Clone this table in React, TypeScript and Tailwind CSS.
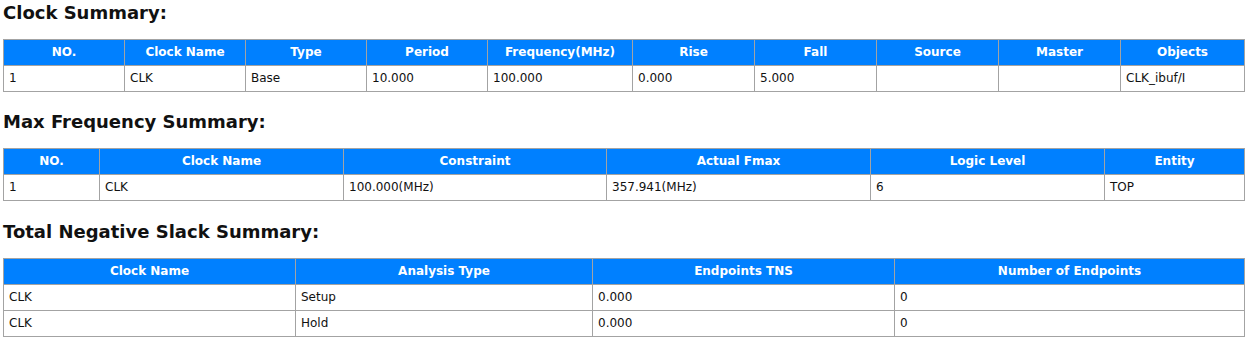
import { ReactNode } from "react";

interface Column {
  label: string;
  width: number;
}

interface SummaryTableProps {
  title: string;
  columns: Column[];
  rows: ReactNode[][];
  sectionClass: string;
}

function SummaryTable({ title, columns, rows, sectionClass }: SummaryTableProps) {
  return (
    <section className={sectionClass}>
      <h3 className="text-[18px] leading-[22px] font-bold text-[#111]">{title}</h3>
      <table className="mt-[15px] w-[1241px] table-fixed border-collapse text-[12px] leading-[15px]">
        <colgroup>
          {columns.map((c) => (
            <col key={c.label} style={{ width: c.width }} />
          ))}
        </colgroup>
        <thead>
          <tr>
            {columns.map((c) => (
              <th
                key={c.label}
                className="border border-[#a3a3a3] bg-[#0080ff] px-[5px] py-[5px] text-center font-bold text-white"
              >
                {c.label}
              </th>
            ))}
          </tr>
        </thead>
        <tbody>
          {rows.map((row, i) => (
            <tr key={i}>
              {row.map((cell, j) => (
                <td
                  key={j}
                  className="border border-[#a3a3a3] px-[5px] py-[5px] text-left font-normal text-[#111]"
                >
                  {cell}
                </td>
              ))}
            </tr>
          ))}
        </tbody>
      </table>
    </section>
  );
}

const clockColumns: Column[] = [
  { label: "NO.", width: 121 },
  { label: "Clock Name", width: 121 },
  { label: "Type", width: 121 },
  { label: "Period", width: 121 },
  { label: "Frequency(MHz)", width: 145 },
  { label: "Rise", width: 122 },
  { label: "Fall", width: 122 },
  { label: "Source", width: 122 },
  { label: "Master", width: 122 },
  { label: "Objects", width: 124 },
];

const fmaxColumns: Column[] = [
  { label: "NO.", width: 96 },
  { label: "Clock Name", width: 244 },
  { label: "Constraint", width: 263 },
  { label: "Actual Fmax", width: 264 },
  { label: "Logic Level", width: 234 },
  { label: "Entity", width: 140 },
];

const tnsColumns: Column[] = [
  { label: "Clock Name", width: 292 },
  { label: "Analysis Type", width: 297 },
  { label: "Endpoints TNS", width: 302 },
  { label: "Number of Endpoints", width: 350 },
];

export default function App() {
  return (
    <div
      className="min-h-[342px] bg-white pl-[3px]"
      style={{ fontFamily: '"DejaVu Sans", Verdana, sans-serif' }}
    >
      <SummaryTable
        sectionClass="pt-[2px]"
        title="Clock Summary:"
        columns={clockColumns}
        rows={[["1", "CLK", "Base", "10.000", "100.000", "0.000", "5.000", "", "", "CLK_ibuf/I"]]}
      />
      <SummaryTable
        sectionClass="pt-[19px]"
        title="Max Frequency Summary:"
        columns={fmaxColumns}
        rows={[["1", "CLK", "100.000(MHz)", "357.941(MHz)", "6", "TOP"]]}
      />
      <SummaryTable
        sectionClass="pt-[20px]"
        title="Total Negative Slack Summary:"
        columns={tnsColumns}
        rows={[
          ["CLK", "Setup", "0.000", "0"],
          ["CLK", "Hold", "0.000", "0"],
        ]}
      />
    </div>
  );
}
